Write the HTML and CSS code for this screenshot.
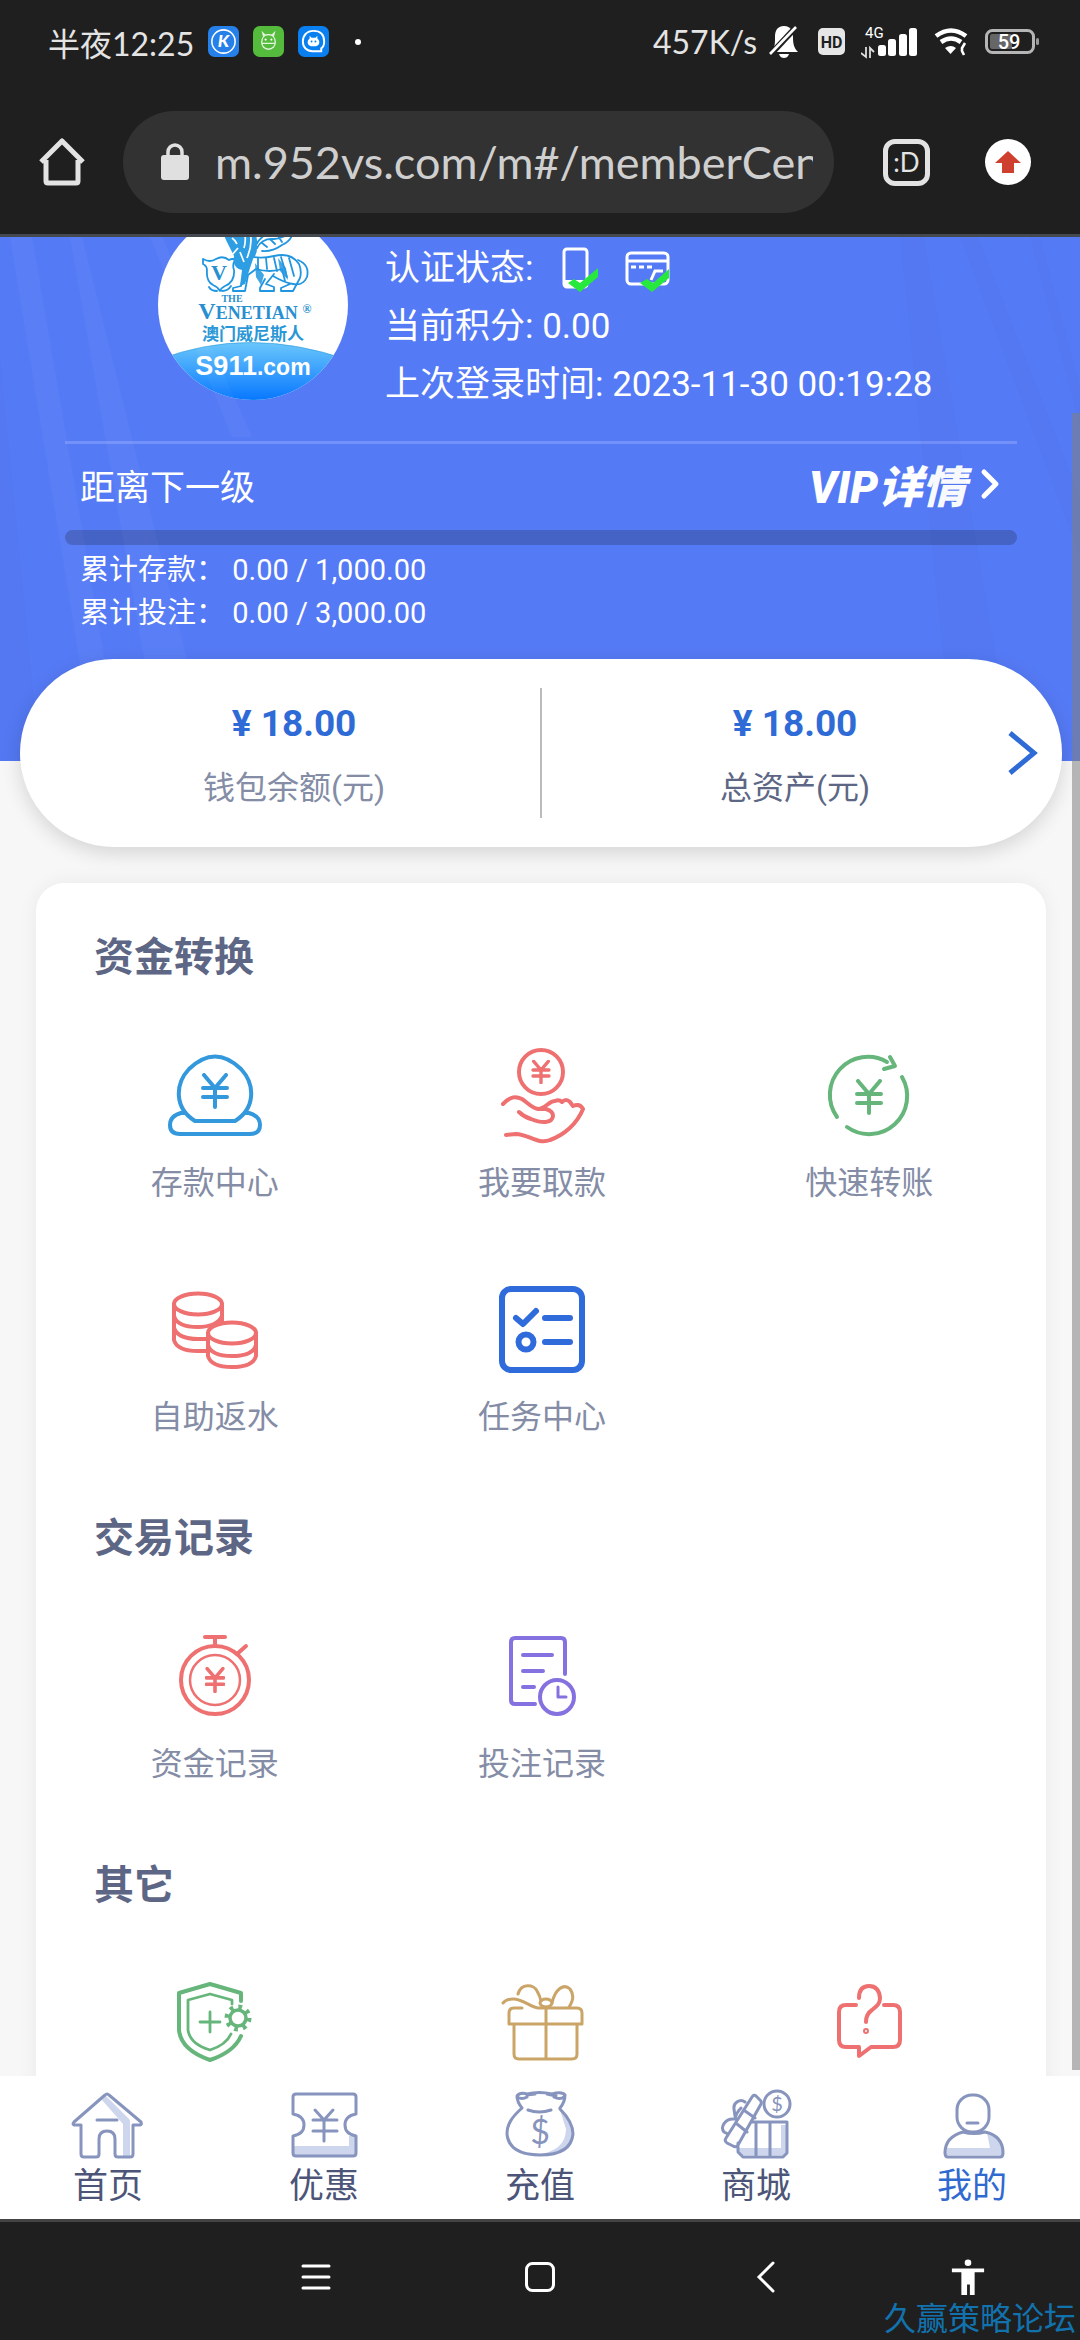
FILE: index.html
```html
<!DOCTYPE html>
<html lang="zh-CN">
<head>
<meta charset="utf-8">
<meta name="viewport" content="width=device-width, initial-scale=1">
<title>m.952vs.com</title>
<link rel="stylesheet" href="styles.css">
</head>
<body>
<svg class="defs" aria-hidden="true">
  <symbol id="yen" viewBox="0 0 28 36"><path d="M3 2l11 13L25 2M14 15v19M2 15h24M2 24h24"/></symbol>
</svg>

<header class="browser">
  <div class="status">
    <span class="clock">半夜12:25</span>
    <svg class="app" viewBox="0 0 32 32"><rect width="32" height="32" rx="7" fill="#2680ea"/><circle cx="16" cy="16" r="12" fill="none" stroke="#fff" stroke-width="1.6"/><text x="16" y="22" text-anchor="middle" class="app-letter">K</text></svg>
    <svg class="app" viewBox="0 0 32 32"><rect width="32" height="32" rx="7" fill="#55bb3d"/><g fill="none" stroke="#e4f6df" stroke-width="1.3"><path d="M9 17c0-5 3-8 7-8s7 3 7 8c0 4-3 7-7 7s-7-3-7-7zM9 18h14M11 11l-1-4 3 3M21 11l1-4-3 3M14 9h4"/></g><circle cx="13" cy="14" r="1.1" fill="#fff"/><circle cx="19" cy="14" r="1.1" fill="#fff"/></svg>
    <svg class="app" viewBox="0 0 32 32"><rect width="32" height="32" rx="7" fill="#0a7ff0"/><path d="M24 26H15c-6 0-10-4-10-10S9 5 16 5s11 4 11 11c0 4-1 6-3 7z" fill="none" stroke="#fff" stroke-width="2"/><path d="M10 17c0-2 1-3 2-4v-3l2 2h4l2-2v3c1 1 2 2 2 4 0 3-3 4-6 4s-6-1-6-4z" fill="#fff"/><circle cx="14" cy="16" r="1" fill="#0a7ff0"/><circle cx="18" cy="16" r="1" fill="#0a7ff0"/></svg>
    <i class="dot"></i>
    <span class="speed">457K/s</span>
    <svg class="s-bell" viewBox="0 0 30 34" fill="#fff"><path d="M15 1c7 0 9 5 9 11 0 7 1 11 5 15H2c4-4 4-8 4-15C6 6 8 1 15 1zM10 29h10c-1 3-3 4-5 4s-4-1-5-4z"/><path d="M29 0L2 29" stroke="#1f1f1f" stroke-width="6"/><path d="M27 2L1 29" stroke="#fff" stroke-width="2.6"/></svg>
    <svg class="s-hd" viewBox="0 0 27 27"><rect width="27" height="27" rx="5" fill="#e6e6e6"/><text x="13.5" y="20" text-anchor="middle">HD</text></svg>
    <svg class="s-signal" viewBox="0 0 57 34" fill="#fff"><text x="4" y="13">4G</text><path d="M5 22v10l-5-4M9 33V23l4 4" fill="none" stroke="#ddd" stroke-width="1.8"/><rect x="17" y="20" width="8" height="11" rx="2.5"/><rect x="27" y="14" width="8" height="17" rx="2.5"/><rect x="38" y="9" width="8" height="22" rx="2.5"/><rect x="48" y="3" width="8" height="28" rx="2.5"/></svg>
    <svg class="s-wifi" viewBox="0 0 34 28" fill="none" stroke="#fff" stroke-width="4.6"><path d="M2 8q15-11 30 0M7 14q10-7 20 0"/><path d="M11 20q6-4 11 0l-5.500 6z" fill="#fff" stroke="none"/><path d="M32 16q-6 5-2 11" stroke="#1f1f1f" stroke-width="7"/><path d="M31 15l-3 5v3l2 4" stroke-width="2.6"/></svg>
    <svg class="s-batt" viewBox="0 0 54 26"><rect x="1.500" y="1.500" width="47" height="22" rx="6" fill="none" stroke="#b5b5b5" stroke-width="3"/><rect x="5" y="5" width="22" height="15" rx="2" fill="#666"/><rect x="51" y="9" width="3" height="7" rx="1.500" fill="#999"/><text x="24" y="20" text-anchor="middle">59</text></svg>
  </div>
  <div class="address">
    <button class="plain home"><svg viewBox="0 0 48 48" fill="none" stroke="#e3e3e3" stroke-width="5" stroke-linejoin="round"><path d="M3 24L24 3l21 21M8 22v21q0 2 2 2h28q2 0 2-2V22"/></svg></button>
    <label class="url">
      <svg viewBox="0 0 28 38"><path d="M7 14V9a7 7 0 0 1 14 0v5" fill="none" stroke="#e0e0e0" stroke-width="3.500"/><rect y="12" width="28" height="25" rx="3" fill="#e0e0e0"/></svg>
      <input type="text" value="m.952vs.com/m#/memberCenter">
    </label>
    <button class="plain tabs">:D</button>
    <button class="plain update"><svg viewBox="0 0 46 46"><circle cx="23" cy="23" r="23" fill="#fff"/><path d="M23 12l13 12h-7v10H17V24h-7z" fill="#cf3f30"/></svg></button>
  </div>
</header>

<main class="page">
  <section class="hero">
    <svg class="streaks" viewBox="0 0 1080 524" preserveAspectRatio="none"><g fill="#fff" opacity=".03"><path d="M10 0h22l90 524H96zM70 0h12l130 524h-50zM150 0h12l90 200-20 0z"/></g><g fill="#123a9a" opacity=".03"><path d="M900 0h24l90 524h-60zM960 0h18l102 260v60zM1030 0h10l40 150v40zM0 120l40 404H0z"/></g></svg>
    <div class="profile">
      <svg class="avatar" viewBox="0 0 190 190">
        <defs>
          <linearGradient id="band" x1="0" y1="0" x2="0" y2="1"><stop offset="0" stop-color="#6ac6fb"/><stop offset="1" stop-color="#0878ff"/></linearGradient>
          <clipPath id="disc"><circle cx="95" cy="95" r="95"/></clipPath>
        </defs>
        <g clip-path="url(#disc)">
          <rect width="190" height="190" fill="#fff"/>
          <path d="M0 150Q90 115 190 150v40H0z" fill="url(#band)" stroke="#2a9bd8" stroke-width=".6"/>
        </g>
        <g fill="none" stroke="#2196e0" stroke-width="1.800" stroke-linecap="round" stroke-linejoin="round">
          <path d="M45 49q7 4 13 0 7-4 13 1 4-2 6 0-3 5-1 10 1 12-9 16-4 2-5 5-2-4-7-6-7-4-6-15 0-4-4-6zM51 77q2 4 8 4M73 76q-3 5-9 5"/>
          <path d="M84 44q15 6 32 2 17-4 25 8 3 7 1 14l-7 13h-12v-3l9-4M86 62l-3 14-8 2v3h12l3-16 8-6q14 4 26 0l3 12"/>
          <path d="M116 64l-8 10 8 3v4h-14v-3l5-9M140 50q12 5 9 17-4 9-14 7-8-1-20-8M100 48v12M108 48l1 11M116 48l3 13M123 47l6 20M131 48l5 18"/>
          <path d="M99 38q5-10 17-9 12-1 20-10-2 12-12 16M98 35q6-13 30-18M104 41q10 1 20-6M104 33l5 4M112 29l5 5M120 26l4 6"/>
        </g>
        <path d="M68 30q-4-8 3-15h20q9 8 8 20 1 8-4 14l-3 9-5 16-5 2 2-16q-10-2-8-14z" fill="#2d9ee4"/>
        <path d="M74 28q3 2 5 6M85 18q4 10 1 20M92 22q3 12-3 26M80 20l-2 6M82 42l4 10M80 38l-7 8" fill="none" stroke="#fff" stroke-width="1.700"/>
        <path d="M97 53l9 12-3 10-5-8zM120 48l8 10 2 12-8-9z" fill="#2196e0" opacity=".85"/>
        <g class="brand">
          <text x="61" y="70" text-anchor="middle" font-size="22">V</text>
          <text x="74" y="92" text-anchor="middle" font-size="10">THE</text>
          <text x="90" y="109" text-anchor="middle" font-size="18"><tspan font-size="24">V</tspan>ENETIAN</text>
          <text x="149" y="103" text-anchor="middle" font-size="12">®</text>
        </g>
        <text class="brand-cn" x="95" y="130" text-anchor="middle">澳门威尼斯人</text>
        <text class="brand-url" x="95" y="165" text-anchor="middle">S911<tspan font-size="23">.com</tspan></text>
      </svg>
      <div class="facts">
        <div class="fact">认证状态:
          <svg class="v-phone" viewBox="0 0 38 46"><rect x="2" y="2" width="23" height="38" rx="3" fill="none" stroke="#fff" stroke-width="3"/><path d="M2 33h24v7H2z" fill="#fff"/><path d="M6 36l6-4 6 4L36 21v9L18 45z" fill="#27e83c"/></svg>
          <svg class="v-card" viewBox="0 0 46 46"><g fill="none" stroke="#fff" stroke-width="3"><rect x="2" y="6" width="41" height="31" rx="4"/><path d="M2 14h41M6 20h5M14 20h5M22 20h5M26 33l4-9h8"/></g><path d="M15 36l7-4 6 4L44 22v9L27 45z" fill="#27e83c"/></svg>
        </div>
        <div class="fact">当前积分: 0.00</div>
        <div class="fact">上次登录时间: 2023-11-30 00:19:28</div>
      </div>
    </div>
    <hr class="rule">
    <div class="level">
      <span>距离下一级</span>
      <a class="vip" href="#vip"><span>VIP详情</span><svg viewBox="0 0 20 32" fill="none" stroke="#fff" stroke-width="5" stroke-linecap="round" stroke-linejoin="round"><path d="M4 4l12 12L4 28"/></svg></a>
    </div>
    <div class="bar"></div>
    <div class="stats">
      <div>累计存款： 0.00 / 1,000.00</div>
      <div>累计投注： 0.00 / 3,000.00</div>
    </div>
  </section>

  <section class="balance">
    <div class="sum"><strong>¥ 18.00</strong><span>钱包余额(元)</span></div>
    <div class="sum total"><strong>¥ 18.00</strong><span>总资产(元)</span></div>
    <a class="more" href="#assets"><svg viewBox="0 0 30 46" fill="none" stroke="#2f6bd6" stroke-width="5"><path d="M2 3l24 20L2 43"/></svg></a>
  </section>

  <div class="panel">
    <section class="group">
      <h2>资金转换</h2>
      <div class="grid">
        <a class="item blue" href="#deposit"><svg viewBox="0 0 96 96"><path d="M28 73C7 60 8 36 22 21q26-25 52 0c14 15 15 39-6 52zM17 65h-3q-11 3-11 12 0 9 10 9h70q10 0 10-9 0-9-11-12h-3"/><use href="#yen" x="34" y="25" width="28" height="36"/></svg><span>存款中心</span></a>
        <a class="item red" href="#withdraw"><svg viewBox="0 0 96 96"><circle cx="47" cy="24" r="22"/><path d="M9 56C17 48 22 48 28 51c6 4 10 9 16 10 7 0 11-8 17-8q4-2 7 1 4-4 8 0l3 4q7-3 10 3C83 76 70 87 56 92c-12 5-22-6-34-6l-10 1M25 64q5 5 12 7c10 4 21 5 22-3q0-5-7-7h-8"/><use class="small-yen" href="#yen" x="37" y="12" width="20" height="24"/></svg><span>我要取款</span></a>
        <a class="item green" href="#transfer"><svg viewBox="0 0 96 96"><path d="M66 14A38 38 0 0 0 16 69M26 79A38 38 0 0 0 81 29M69 9l5 9-11 3"/><use href="#yen" x="34" y="31" width="28" height="36"/></svg><span>快速转账</span></a>
        <a class="item red" href="#rebate"><svg viewBox="0 0 96 96"><ellipse cx="31" cy="22" rx="24" ry="10.500"/><path d="M7 22v36q3 11 24 11h9M55 22v18M7 34q3 11 24 11 9 0 16-3M7 46q4 11 24 11h9M55 34q-2 5-8 8"/><ellipse cx="65" cy="51" rx="24" ry="10.500"/><path d="M41 51v23q3 11 24 11t24-11V51M41 63q3 11 24 11t24-11"/></svg><span>自助返水</span></a>
        <a class="item deep" href="#tasks"><svg viewBox="0 0 96 96"><rect x="8" y="7" width="80" height="81" rx="9"/><path d="M22 36l7 6 13-13M51 36h25M51 60h25"/><circle cx="32" cy="60" r="7.500"/></svg><span>任务中心</span></a>
      </div>
    </section>
    <section class="group">
      <h2>交易记录</h2>
      <div class="grid">
        <a class="item red" href="#funds"><svg viewBox="0 0 96 96"><circle cx="48" cy="51" r="34"/><circle cx="48" cy="51" r="25" stroke-width="2.500"/><path d="M38 8h20M48 8v8M70 25l9-8"/><use class="small-yen" href="#yen" x="38" y="38" width="20" height="26"/></svg><span>资金记录</span></a>
        <a class="item purple" href="#bets"><svg viewBox="0 0 96 96"><path d="M71 45V13q0-4-4-4H21q-4 0-4 4v58q0 4 4 4h20M29 26h29M29 42h20M29 58h11"/><circle cx="63" cy="68" r="17"/><path d="M64 58v10h8" stroke-width="3"/></svg><span>投注记录</span></a>
      </div>
    </section>
    <section class="group">
      <h2>其它</h2>
      <div class="grid">
        <a class="item green" href="#security"><svg viewBox="0 0 96 96"><path d="M74 25v-8L43 8 12 17v37q2 20 31 30 24-8 31-24"/><g stroke-width="2.800"><path d="M65 28v-4l-22-6-22 6v30q2 14 22 20 16-5 21-16M43 36v20M33 46h20"/></g><circle cx="71" cy="42" r="8" stroke-width="3.500"/><circle cx="71" cy="42" r="11" stroke-width="5" stroke-dasharray="3.640 5" stroke-linecap="butt"/></svg></a>
        <a class="item gold" href="#bonus"><svg viewBox="0 0 96 96"><path d="M28 32h-8q-5 0-5 5v11h73V37q0-5-5-5H44C36 31 29 23 19 23q-7 0-10 4M20 48v30q0 5 5 5h53q5 0 5-5V48M52 31v52M24 18c3-11 16-10 19-3q3 5 4 10M58 27c3-14 12-20 18-14q6 8-1 18"/><ellipse cx="52" cy="27" rx="6" ry="4"/></svg></a>
        <a class="item red" href="#help"><svg viewBox="0 0 96 96"><path d="M35 29H25q-7 0-7 7v28q0 7 7 7h13v9l12-9h22q7 0 7-7V36q0-7-7-7h-9M38 22q0-12 10-12t11 12c0 6-3 8-8 12q-6 4-6 12"/><circle cx="45" cy="55" r="1"/></svg></a>
      </div>
    </section>
  </div>
  <i class="scrollbar"></i>
</main>

<nav class="tabbar">
  <a href="#home"><svg viewBox="0 0 80 72"><path class="shade" d="M37 7l25 25v36H55V36L34 12z"/><path d="M13 37H6q-2-1 0-3L37 7q2-2 4 0l32 27q1 3-1 3h-7v29q0 3-3 3H50q-3 0-3-3V51q0-8-8-8t-8 8v15q0 3-3 3H16q-3 0-3-3zM29 32h20"/></svg><span>首页</span></a>
  <a href="#offers"><svg viewBox="0 0 80 72"><path class="shade" d="M10 58h55V48h6v19H10z"/><path d="M9 26V9q0-3 3-3h57q3 0 3 3v17q-11 2-11 11t11 11v17q0 3-3 3H12q-3 0-3-3V48q11-2 11-11T9 26zM31 22l9 10 9-10M40 32v21M29 32h24M29 43h24"/></svg><span>优惠</span></a>
  <a href="#recharge"><svg viewBox="0 0 80 72"><path class="shade" d="M60 22q12 12 12 24-2 18-20 20l-16 1q30-4 30-26z"/><path d="M22 20q-5-6-5-12 3-4 10-2 12-3 25 0 10-3 13 1 0 7-5 13M22 20C12 29 7 36 7 46q2 21 33 21t33-21q0-12-13-25M27 7l8-1M47 6l9 2M17 9q5 3 10 0M54 9q6 3 10 0M28 22q11 4 23 0"/><text x="40" y="56" text-anchor="middle" font-size="34">$</text></svg><span>充值</span></a>
  <a href="#shop"><svg viewBox="0 0 80 72"><path class="shade" d="M22 60h43V37h6v30H24z"/><path d="M36 34h35v31l-4 4H27l-5-5V55M40 34v35M54 34v35M36 9q2-3 4-1l4 4q2 2 1 4L22 57q-2 3-5 1l-6-3q-3-2-1-5zM29 23l10 7M21 36l10 8M29 14c-5-4-12 1-11 7l1 7M17 31c-8 0-13 8-9 13l4 2M25 20q-5 5-6 11"/><circle cx="61" cy="16" r="13"/><text x="61" y="23" text-anchor="middle" font-size="20">$</text></svg><span>商城</span></a>
  <a class="active" href="#me"><svg viewBox="0 0 80 72"><path class="shade" d="M55 45q15 5 16 22H13v-7h45z"/><rect x="25" y="7" width="32" height="37" rx="15"/><path d="M35 35h11M31 44q-18 5-18 21 0 4 3 4h52q3 0 3-4 0-17-18-21-11 3-22 0z"/></svg><span>我的</span></a>
</nav>

<footer class="system">
  <button class="plain"><svg viewBox="0 0 34 34"><path d="M4 6h26M4 17h26M4 28h26"/></svg></button>
  <button class="plain"><svg viewBox="0 0 34 34"><rect x="3.500" y="3.500" width="27" height="27" rx="6"/></svg></button>
  <button class="plain"><svg viewBox="0 0 34 34"><path d="M24 3L10 17l14 14"/></svg></button>
  <button class="plain"><svg viewBox="0 0 34 38"><circle cx="17" cy="4" r="3.500" fill="#fff" stroke="none"/><path d="M0 10h34v4H24v24h-5V27h-3v11h-6V14H0z" fill="#fff" stroke="none"/></svg></button>
  <span class="watermark">久赢策略论坛</span>
</footer>
</body>
</html>
```
FILE: styles.css
```css
* {
  box-sizing: border-box;
}

body {
  margin: 0;
  height: 100vh;
  display: flex;
  flex-direction: column;
  background: #f7f7f7;
  font-family: Roboto, "Noto Sans CJK SC", sans-serif;
  overflow: hidden;
}

a {
  color: inherit;
  text-decoration: none;
}

svg {
  display: block;
  flex: none;
}

.defs {
  position: absolute;
  width: 0;
  height: 0;
}

.plain {
  padding: 0;
  border: 0;
  background: none;
  color: inherit;
  font: inherit;
}

/* Browser chrome */
.browser {
  flex: none;
  background: #1f1f1f;
  border-bottom: 3px solid #444950;
  color: #e4e4e4;
  font-family: Lato, "Noto Sans CJK SC", sans-serif;
}

.status {
  display: flex;
  align-items: center;
  height: 83px;
  padding: 0 41px 0 48px;
  font-size: 32px;
}

.app {
  width: 31px;
  height: 31px;
  margin-left: 14px;
}

.app-letter {
  font: italic 900 18px Lato, sans-serif;
  fill: #fff;
}

.dot {
  width: 6px;
  height: 6px;
  margin-left: 26px;
  border-radius: 50%;
  background: #fff;
}

.speed {
  margin-left: auto;
}

.s-bell {
  width: 30px;
  height: 34px;
  margin-left: 12px;
}

.s-hd {
  width: 27px;
  height: 27px;
  margin-left: 19px;
}

.s-hd text {
  font: 700 16px Roboto, sans-serif;
  fill: #1f1f1f;
}

.s-signal {
  width: 57px;
  height: 34px;
  margin-left: 16px;
}

.s-signal text {
  font: 15px Roboto, sans-serif;
}

.s-wifi {
  width: 34px;
  height: 28px;
  margin-left: 16px;
}

.s-batt {
  width: 54px;
  height: 26px;
  margin-left: 17px;
}

.s-batt text {
  font: 500 20px Roboto, sans-serif;
  fill: #fff;
}

.address {
  display: flex;
  align-items: center;
  height: 151px;
  padding: 7px 49px 0 38px;
}

.home svg {
  width: 48px;
  height: 48px;
}

.url {
  flex: 1;
  display: flex;
  align-items: center;
  gap: 26px;
  height: 102px;
  margin-left: 37px;
  padding: 0 21px 0 38px;
  border-radius: 51px;
  background: #323232;
}

.url svg {
  width: 28px;
  height: 38px;
}

.url input {
  flex: 1;
  min-width: 0;
  height: 60px;
  padding: 0;
  border: 0;
  outline: 0;
  background: none;
  color: #cfcfcf;
  font: 45px Lato, sans-serif;
}

.tabs {
  width: 47px;
  height: 47px;
  margin-left: 49px;
  border: 5px solid #e3e3e3;
  border-radius: 12px;
  font-size: 26px;
  line-height: 32px;
}

.update {
  margin-left: 55px;
}

.update svg {
  width: 46px;
  height: 46px;
}

/* Member page */
.page {
  position: relative;
  flex: 1;
  min-height: 0;
  overflow: hidden;
}

.hero {
  position: relative;
  padding: 0 63px 126px 65px;
  background: #557af5;
  color: #fff;
}

.streaks {
  position: absolute;
  inset: 0;
  width: 100%;
  height: 100%;
}

.profile {
  display: flex;
  align-items: flex-start;
  gap: 37px;
  height: 204px;
  padding-left: 93px;
}

.avatar {
  width: 190px;
  height: 190px;
  margin-top: -27px;
}

.brand {
  font-family: "Liberation Serif", serif;
  font-weight: 700;
  fill: #2a8fd0;
}

.brand-cn {
  font: 700 17px "Noto Sans CJK SC", sans-serif;
  fill: #2a97d6;
}

.brand-url {
  font: 700 27px "Liberation Sans", sans-serif;
  fill: #fff;
}

.facts {
  margin-top: -2px;
}

.fact {
  display: flex;
  align-items: center;
  height: 58px;
  font-size: 35px;
  white-space: nowrap;
}

.v-phone {
  width: 38px;
  height: 46px;
  margin: 12px 0 0 29px;
}

.v-card {
  width: 46px;
  height: 46px;
  margin: 12px 0 0 25px;
}

.rule {
  height: 3px;
  margin: 0;
  border: 0;
  background: #7391f8;
}

.level {
  display: flex;
  align-items: center;
  justify-content: space-between;
  height: 80px;
  margin-bottom: 6px;
  padding: 0 17px 0 15px;
  font-size: 35px;
}

.vip {
  display: flex;
  align-items: center;
  gap: 14px;
  font-size: 44px;
  font-style: italic;
  font-weight: 900;
}

.vip svg {
  width: 20px;
  height: 32px;
}

.bar {
  height: 15px;
  border-radius: 8px;
  background: #4562c5;
}

.stats {
  padding: 4px 0 0 15px;
  font-size: 29px;
  line-height: 43px;
}

.balance {
  position: relative;
  display: grid;
  grid-template-columns: 1fr 1fr;
  height: 188px;
  margin: -102px 18px 36px 20px;
  padding: 29px 22px 29px 20px;
  border-radius: 94px;
  background: #fff;
  box-shadow: 0 6px 20px rgba(0, 0, 0, 0.14);
}

.sum {
  display: flex;
  flex-direction: column;
  align-items: center;
  gap: 18px;
  padding: 13px 0 0 8px;
  color: #848ca6;
  font-size: 32px;
  line-height: 46px;
}

.sum strong {
  color: #2f6bd6;
  font-size: 37px;
}

.total {
  border-left: 2px solid #bbb;
  color: #5d6785;
}

.more {
  position: absolute;
  top: 71px;
  right: 24px;
}

.more svg {
  width: 30px;
  height: 46px;
}

.panel {
  margin: 0 34px 0 36px;
  padding: 0 13px 0 15px;
  border-radius: 28px;
  background: #fff;
  box-shadow: 0 0 20px rgba(0, 0, 0, 0.06);
}

.group {
  padding: 45px 0 8px;
}

.group h2 {
  margin: 0 0 0 43px;
  color: #5d6785;
  font-size: 40px;
  line-height: 60px;
}

.grid {
  display: grid;
  grid-template-columns: repeat(3, 1fr);
  grid-auto-rows: 234px;
}

.item {
  display: flex;
  flex-direction: column;
  align-items: center;
  gap: 16px;
  padding-top: 60px;
}

.item span {
  color: #848ca6;
  font-size: 32px;
  line-height: 46px;
}

.item svg {
  width: 96px;
  height: 96px;
  fill: none;
  stroke: currentColor;
  stroke-width: 4;
  stroke-linecap: round;
  stroke-linejoin: round;
}

.small-yen {
  stroke-width: 5;
}

.blue {
  color: #3498dc;
}

.red {
  color: #ee7070;
}

.green {
  color: #66b57b;
}

.deep {
  color: #2f6bdb;
}

.deep svg {
  stroke-width: 6;
}

.purple {
  color: #8571e0;
}

.gold {
  color: #cba568;
}

.gold svg {
  stroke-width: 3;
}

.scrollbar {
  position: absolute;
  top: 176px;
  right: 0;
  bottom: 6px;
  width: 8px;
  background: rgba(128, 128, 128, 0.55);
}

/* Site navigation */
.tabbar {
  flex: none;
  display: grid;
  grid-template-columns: repeat(5, 1fr);
  padding: 12px 0 9px;
  background: #fff;
  color: #4c5578;
  font-size: 35px;
  line-height: 46px;
}

.tabbar a {
  display: flex;
  flex-direction: column;
  align-items: center;
  gap: 4px;
}

.tabbar svg {
  width: 80px;
  height: 72px;
  fill: none;
  stroke: #8794bd;
  stroke-width: 3;
  stroke-linecap: round;
  stroke-linejoin: round;
}

.tabbar .shade {
  fill: #cdd6ec;
  stroke: none;
}

.tabbar text {
  font-family: Lato, sans-serif;
  fill: #8794bd;
  stroke: none;
}

.tabbar .active {
  color: #3069d0;
}

/* System buttons */
.system {
  position: relative;
  flex: none;
  display: grid;
  grid-template-columns: 224fr 224fr 228fr 176fr;
  justify-items: center;
  height: 121px;
  padding: 37px 24px 0 204px;
  border-top: 3px solid #444;
  background: #1f1f1f;
}

.system .plain {
  height: 36px;
}

.system svg {
  width: 34px;
  height: 36px;
  fill: none;
  stroke: #fff;
  stroke-width: 3;
  stroke-linecap: round;
}

.watermark {
  position: absolute;
  right: 4px;
  bottom: 3px;
  color: #1272ad;
  font-size: 32px;
  line-height: 36px;
}
```
